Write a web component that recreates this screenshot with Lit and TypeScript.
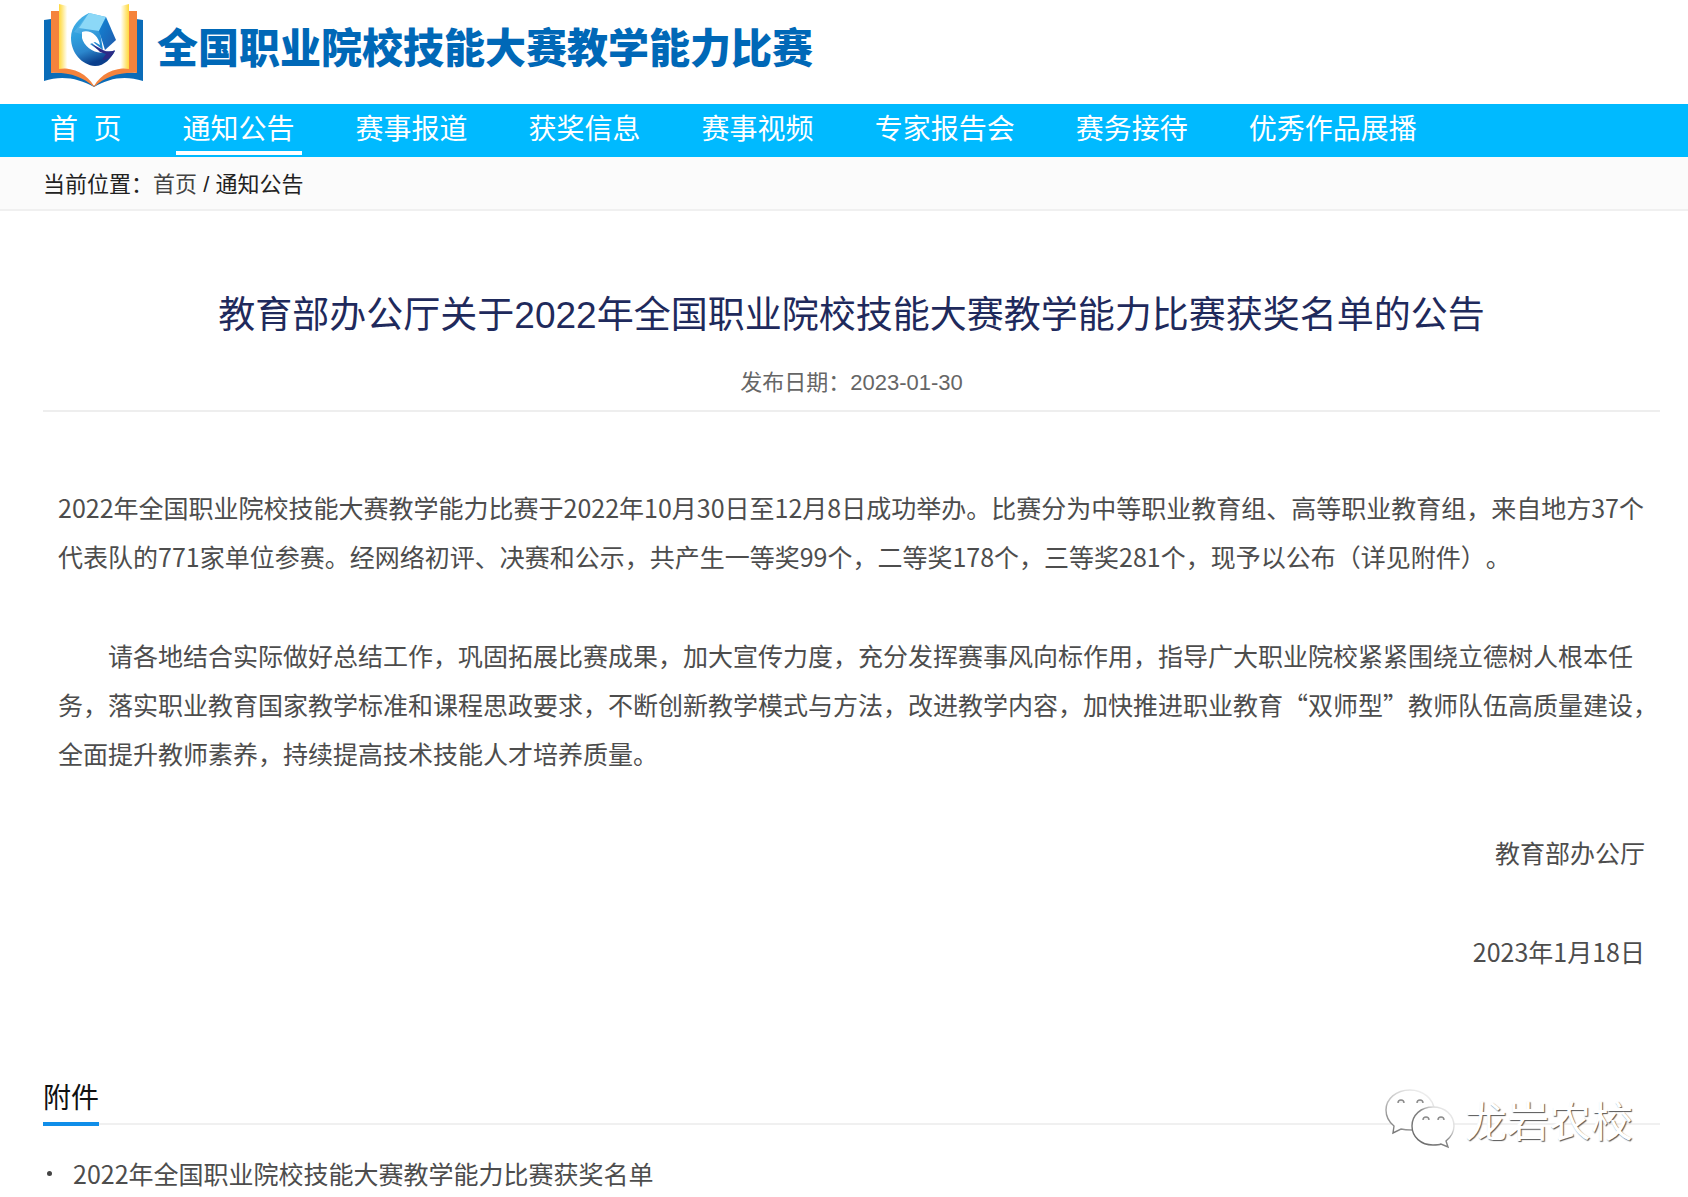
import { LitElement, html, css, svg } from "lit";
import { customElement } from "lit/decorators.js";

const NAV = [
  "首\u00a0\u00a0页",
  "通知公告",
  "赛事报道",
  "获奖信息",
  "赛事视频",
  "专家报告会",
  "赛务接待",
  "优秀作品展播",
];
const CURRENT = "通知公告";

const logo = svg`
  <defs>
    <linearGradient id="page" x1="0" x2="1"><stop offset="0" stop-color="#ffd83c"/><stop offset="0.4" stop-color="#ffe780"/><stop offset="1" stop-color="#fffef8"/></linearGradient>
    <linearGradient id="pageR" x1="1" x2="0"><stop offset="0" stop-color="#ffd83c"/><stop offset="0.4" stop-color="#ffe780"/><stop offset="1" stop-color="#fffef8"/></linearGradient>
    <linearGradient id="ring" x1="0" y1="0" x2="0.3" y2="1"><stop offset="0" stop-color="#4db4e8"/><stop offset="0.45" stop-color="#2f9fdd"/><stop offset="0.75" stop-color="#2b86cc"/><stop offset="1" stop-color="#0a3f8c"/></linearGradient>
    <linearGradient id="side" x1="0" y1="0" x2="1" y2="1"><stop offset="0" stop-color="#1186d6"/><stop offset="1" stop-color="#1f58ab"/></linearGradient>
    <linearGradient id="front" x1="0" y1="0" x2="0.6" y2="1"><stop offset="0" stop-color="#6cc9f2"/><stop offset="1" stop-color="#1c86d0"/></linearGradient>
  </defs>
  <path fill="#0a6cb8" d="M1 20 8 19V73C24 71 40 75 51 86 62 75 78 71 93 73V19L100 20V81C82 75 66 78 51 87 36 78 18 75 1 81Z"/>
  <path fill="#f5833c" d="M8 11H16V68C32 68 44 74 51 86 58 74 70 68 86 68V11H94V73C76 72 62 77 51 87 40 77 26 72 8 73Z"/>
  <path fill="url(#page)" d="M16 4 24 6V68C21 68 19 69 16 69Z"/>
  <path fill="url(#pageR)" d="M86 4 78 6V68C81 68 83 69 86 69Z"/>
  <path fill="url(#ring)" d="M46 13C36 18 28 26 28 38 28 53 39 65 52 66 62 66 68 58 72 51L58 52 40 34 56 32Z"/>
  <path fill="url(#front)" d="M46 13 63 17 57 32 60 50 50 42 38 34 31 32Z"/>
  <path fill="#8cd8f7" d="M46 13 63 17 56 31 36 28Z"/>
  <path fill="url(#side)" d="M63 17 73 40 62 50 56 31Z"/>
  <path fill="#fff" d="M39 32C47 29 56 36 57 45L52 42 47 44 54 49 62 52C53 55 41 47 39 38Z"/>
  <path fill="#2d2a86" d="M49 44 60 50C64 52 68 52 72 50 69 57 65 60 59 60L63 54 57 52Z"/>
`;

const bubbles = svg`
  <defs>
    <linearGradient id="rim" x1="0" y1="1" x2="0.7" y2="0"><stop offset="0" stop-color="#6a6a6a"/><stop offset="0.55" stop-color="#c4c4c4"/><stop offset="1" stop-color="#eeeeee"/></linearGradient>
    <linearGradient id="rimFront" x1="0.1" y1="0.9" x2="1" y2="0.1"><stop offset="0" stop-color="#6a6a6a"/><stop offset="0.5" stop-color="#858585"/><stop offset="0.75" stop-color="#dcdcdc"/><stop offset="1" stop-color="#efefef"/></linearGradient>
  </defs>
  <path fill="#fff" stroke="url(#rim)" stroke-width="1.4" d="M25 2C11 2 1 11 1 22c0 7 3 12 8 16l-1 7 8-4c4 1 7 1 11 1 12 0 22-9 22-20S38 2 25 2Z"/>
  <path fill="#fff" stroke="url(#rimFront)" stroke-width="1.4" d="M48 19c-12 0-21 8-21 19s9 19 21 19c3 0 6 0 8-1l7 3-2-6c5-4 8-9 8-15 0-11-9-19-21-19Z"/>
  <g fill="#f4f4f4" stroke="#8a8a8a" stroke-width="1.4">
    <path d="M13 15a3 3 0 0 1 6 0M32 15a3 3 0 0 1 6 0M38 32a3 3 0 0 1 6 0M53 32a3 3 0 0 1 6 0"/>
  </g>
`;

@customElement("app-root")
export class AppRoot extends LitElement {
  static styles = css`
    :host {
      display: block;
      position: relative;
      overflow: hidden;
      background: #fff;
      color: #4d4d4d;
      font-family: "Liberation Sans", "Noto Sans CJK SC", sans-serif;
      text-spacing-trim: space-all;
    }
    a { color: inherit; text-decoration: none; }
    .brand {
      display: flex;
      align-items: center;
      gap: 12px;
      height: 104px;
      padding: 0 43px;
      box-sizing: border-box;
    }
    .logo { width: 102px; height: 88px; flex: none; margin-bottom: 16px; }
    .brand-name {
      margin: 0 0 6px;
      font-size: 41px;
      line-height: 60px;
      font-weight: 900;
      color: #0068b7;
    }
    .nav {
      display: flex;
      gap: 47px;
      height: 53px;
      padding: 0 43px;
      background: #00baff;
      color: #fff;
      font-size: 28px;
      line-height: 46px;
    }
    .nav-link {
      box-sizing: border-box;
      height: 51px;
      padding: 3px 7px 0;
      white-space: nowrap;
      border-bottom: 4px solid transparent;
    }
    .nav-link.current { border-color: #fff; }
    .crumbs {
      padding: 4px 43px 0;
      background: #fbfbfb;
      border-bottom: 2px solid #f0f0f0;
      font-size: 22px;
      line-height: 48px;
      color: #222;
    }
    .crumbs .home { color: #444; }
    .content { padding: 79px 28px 0 43px; }
    .title {
      margin: 0;
      text-align: center;
      font-size: 37px;
      line-height: 52px;
      font-weight: 400;
      color: #1f2a5c;
    }
    .date {
      margin: 0;
      padding: 25px 0 11px;
      text-align: center;
      font-size: 22px;
      line-height: 32px;
      color: #666;
      border-bottom: 2px solid #eee;
    }
    .body {
      padding: 71px 0 0 15px;
      font-family: "Noto Sans CJK SC", sans-serif;
      font-size: 25px;
      line-height: 49px;
    }
    .body p { margin: 0 0 50px; }
    .body .indent { text-indent: 2em; }
    .body .sign { text-align: right; padding-right: 15px; }
    .files { padding-top: 50px; }
    .files-head { display: flex; border-bottom: 2px solid #f0f0f0; }
    .files-title {
      margin: 0 0 -3px;
      font-size: 28px;
      line-height: 46px;
      font-weight: 400;
      color: #111;
      border-bottom: 4px solid #108ee9;
    }
    .file-list {
      margin: 0;
      padding: 24px 0 0;
      list-style: none;
      font-family: "Noto Sans CJK SC", sans-serif;
      font-size: 25px;
      line-height: 48px;
    }
    .file { display: flex; align-items: center; gap: 21px; padding-left: 4px; }
    .dot { width: 5px; height: 5px; border-radius: 50%; background: #444; }
    .mark {
      position: absolute;
      right: 55px;
      bottom: 47px;
      display: flex;
      align-items: center;
      gap: 8px;
      font-family: "Noto Sans CJK SC", sans-serif;
      font-size: 42px;
      line-height: 60px;
      color: #fff;
      text-shadow: 1px 1px 1px #555;
    }
    .mark-icon { width: 72px; height: 62px; }
  `;

  render() {
    return html`
      <header class="brand" lang="zh-CN">
        <svg class="logo" viewBox="0 0 102 88" aria-hidden="true">${logo}</svg>
        <p class="brand-name">全国职业院校技能大赛教学能力比赛</p>
      </header>
      <nav class="nav" lang="zh-CN">
        ${NAV.map(
          (label) => html`<a class="nav-link ${label === CURRENT ? "current" : ""}" href="#">${label}</a>`
        )}
      </nav>
      <div class="crumbs" lang="zh-CN">当前位置：<a class="home" href="#">首页</a> / <a href="#">通知公告</a></div>
      <main class="content" lang="zh-CN">
        <h1 class="title">教育部办公厅关于2022年全国职业院校技能大赛教学能力比赛获奖名单的公告</h1>
        <p class="date">发布日期：2023-01-30</p>
        <article class="body">
          <p>2022年全国职业院校技能大赛教学能力比赛于2022年10月30日至12月8日成功举办。比赛分为中等职业教育组、高等职业教育组，来自地方37个代表队的771家单位参赛。经网络初评、决赛和公示，共产生一等奖99个，二等奖178个，三等奖281个，现予以公布（详见附件）。</p>
          <p class="indent">请各地结合实际做好总结工作，巩固拓展比赛成果，加大宣传力度，充分发挥赛事风向标作用，指导广大职业院校紧紧围绕立德树人根本任务，落实职业教育国家教学标准和课程思政要求，不断创新教学模式与方法，改进教学内容，加快推进职业教育“双师型”教师队伍高质量建设，全面提升教师素养，持续提高技术技能人才培养质量。</p>
          <p class="sign">教育部办公厅</p>
          <p class="sign">2023年1月18日</p>
        </article>
        <section class="files">
          <div class="files-head"><h2 class="files-title">附件</h2></div>
          <ul class="file-list">
            <li class="file"><span class="dot"></span><a href="#">2022年全国职业院校技能大赛教学能力比赛获奖名单</a></li>
          </ul>
        </section>
      </main>
      <div class="mark" lang="zh-CN">
        <svg class="mark-icon" viewBox="0 0 72 62" aria-hidden="true">${bubbles}</svg>
        <span>龙岩农校</span>
      </div>
    `;
  }
}
